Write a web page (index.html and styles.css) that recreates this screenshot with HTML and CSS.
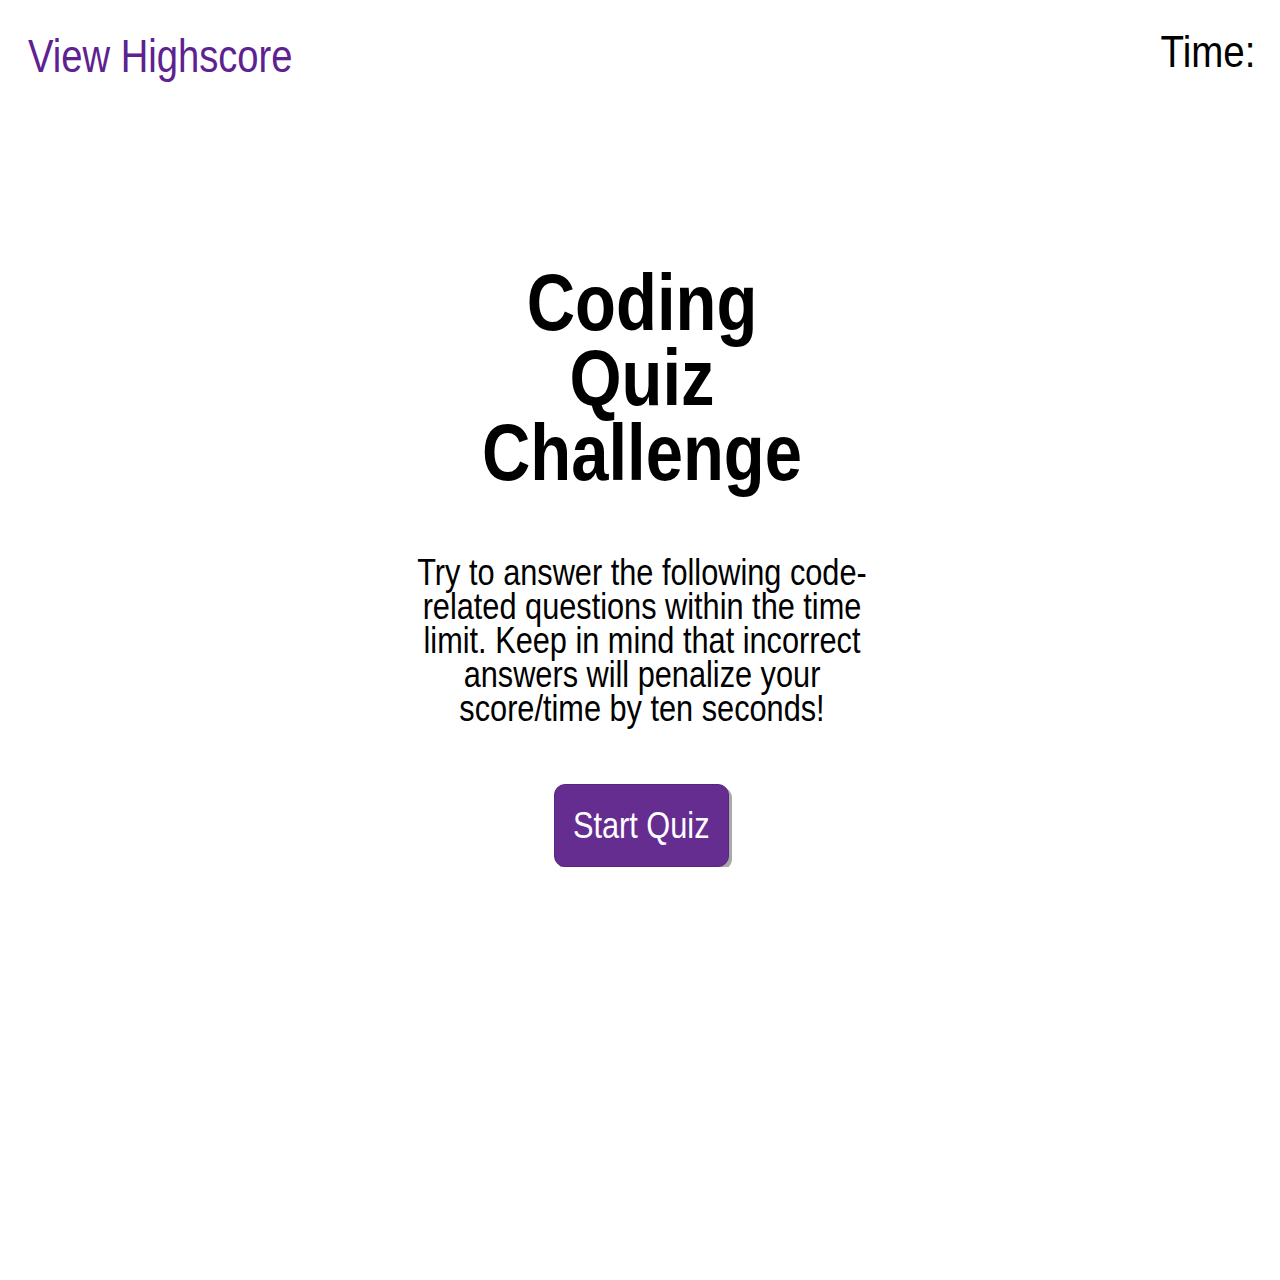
FILE: index.html
```html
<!DOCTYPE html>
<html lang="en">
<head>
<meta charset="utf-8">
<title>Coding Quiz Challenge</title>
<link rel="stylesheet" href="styles.css">
</head>
<body>
<header class="topbar">
  <a class="highscore-link" href="#">View Highscore</a>
  <div class="timer">Time:</div>
</header>
<main class="intro">
  <h1 class="title">Coding Quiz Challenge</h1>
  <p class="description">Try to answer the following code-related questions within the time limit. Keep in mind that incorrect answers will penalize your score/time by ten seconds!</p>
  <button class="start-btn" type="button"><span class="start-label">Start Quiz</span></button>
</main>
</body>
</html>
```

FILE: styles.css
```css
html, body {
  margin: 0;
  padding: 0;
  background: #ffffff;
}

body {
  font-family: "Liberation Sans", Arial, Helvetica, sans-serif;
  color: #000000;
  width: 1280px;
}

/* The design uses a condensed Helvetica; emulate it with a horizontal squeeze */
.condensed,
.highscore-link,
.timer,
.title,
.description,
.start-label {
  transform: scaleX(0.83);
}

.topbar {
  display: flex;
  justify-content: space-between;
  align-items: flex-start;
  padding: 0 25px 0 28px;
}

.highscore-link {
  display: block;
  margin-top: 33px;
  font-size: 46px;
  line-height: 1;
  color: #5e2290;
  text-decoration: none;
  transform-origin: left top;
}

.timer {
  margin-top: 30px;
  font-size: 44px;
  line-height: 1;
  transform: scaleX(0.875);
  transform-origin: right top;
}

.intro {
  display: flex;
  flex-direction: column;
  align-items: center;
  padding-left: 3px;
}

.title {
  margin: 186px 0 0;
  width: 420px;
  text-align: center;
  font-size: 80px;
  line-height: 75px;
  font-weight: bold;
  transform: scaleX(0.837);
}

.description {
  margin: 66px 0 0;
  width: 560px;
  text-align: center;
  font-size: 37px;
  line-height: 34px;
}

.start-btn {
  display: flex;
  align-items: center;
  justify-content: center;
  margin-top: 58px;
  width: 175px;
  height: 83px;
  padding: 0;
  border: 1px solid #5a2384;
  border-radius: 11px;
  background: #662d91;
  color: #ffffff;
  font-family: inherit;
  font-size: 37px;
  box-shadow: 3px 3px 0 #a9a9a9;
  cursor: pointer;
}

.start-label {
  display: inline-block;
  white-space: nowrap;
}
```
